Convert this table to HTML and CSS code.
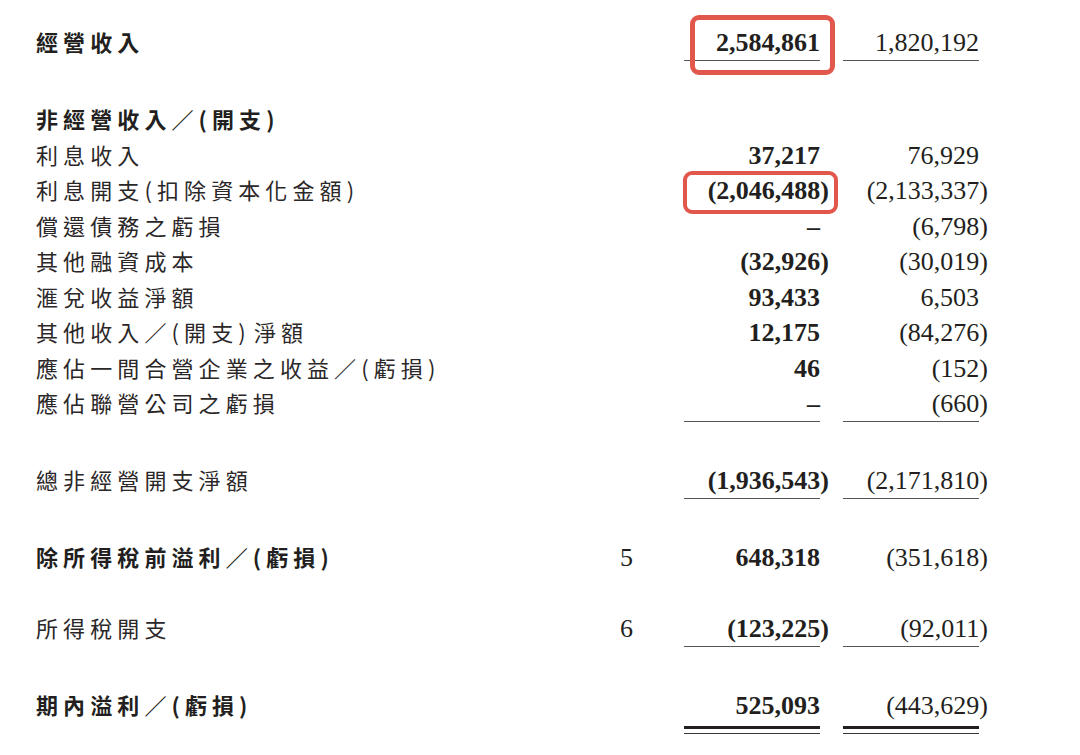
FILE: index.html
```html
<!DOCTYPE html>
<html lang="zh-Hant">
<head>
<meta charset="utf-8">
<link rel="stylesheet" href="styles.css">
</head>
<body>
<div class="stmt">
  <div class="row bold">
    <div class="label">經營收入</div><div class="note"></div>
    <div class="num c1 ul"><span class="mark mark-a"></span>2,584,861</div>
    <div class="num c2 ul">1,820,192</div>
  </div>

  <div class="row bold sp">
    <div class="label">非經營收入／(開支)</div><div class="note"></div>
    <div class="num c1"></div><div class="num c2"></div>
  </div>
  <div class="row">
    <div class="label">利息收入</div><div class="note"></div>
    <div class="num c1">37,217</div><div class="num c2">76,929</div>
  </div>
  <div class="row">
    <div class="label">利息開支(扣除資本化金額)</div><div class="note"></div>
    <div class="num c1"><span class="mark mark-b"></span>(2,046,488<span class="rp">)</span></div>
    <div class="num c2">(2,133,337<span class="rp">)</span></div>
  </div>
  <div class="row">
    <div class="label">償還債務之虧損</div><div class="note"></div>
    <div class="num c1">–</div><div class="num c2">(6,798<span class="rp">)</span></div>
  </div>
  <div class="row">
    <div class="label">其他融資成本</div><div class="note"></div>
    <div class="num c1">(32,926<span class="rp">)</span></div><div class="num c2">(30,019<span class="rp">)</span></div>
  </div>
  <div class="row">
    <div class="label">滙兌收益淨額</div><div class="note"></div>
    <div class="num c1">93,433</div><div class="num c2">6,503</div>
  </div>
  <div class="row">
    <div class="label">其他收入／(開支)<span class="thin"> </span>淨額</div><div class="note"></div>
    <div class="num c1">12,175</div><div class="num c2">(84,276<span class="rp">)</span></div>
  </div>
  <div class="row">
    <div class="label">應佔一間合營企業之收益／(虧損)</div><div class="note"></div>
    <div class="num c1">46</div><div class="num c2">(152<span class="rp">)</span></div>
  </div>
  <div class="row">
    <div class="label">應佔聯營公司之虧損</div><div class="note"></div>
    <div class="num c1 ul">–</div><div class="num c2 ul">(660<span class="rp">)</span></div>
  </div>

  <div class="row sp">
    <div class="label">總非經營開支淨額</div><div class="note"></div>
    <div class="num c1 ul">(1,936,543<span class="rp">)</span></div><div class="num c2 ul">(2,171,810<span class="rp">)</span></div>
  </div>

  <div class="row bold sp">
    <div class="label">除所得稅前溢利／(虧損)</div><div class="note">5</div>
    <div class="num c1">648,318</div><div class="num c2">(351,618<span class="rp">)</span></div>
  </div>

  <div class="row sp-sm">
    <div class="label">所得稅開支</div><div class="note">6</div>
    <div class="num c1 ul">(123,225<span class="rp">)</span></div><div class="num c2 ul">(92,011<span class="rp">)</span></div>
  </div>

  <div class="row bold sp last">
    <div class="label">期內溢利／(虧損)</div><div class="note"></div>
    <div class="num c1 dbl">525,093</div><div class="num c2 dbl">(443,629<span class="rp">)</span></div>
  </div>
</div>
</body>
</html>
```

FILE: styles.css
```css
html, body {
  margin: 0;
  padding: 0;
  background: #ffffff;
}

body {
  color: #231f20;
}

.stmt {
  padding: 25px 0 0 36px;
  width: 1044px;
}

.row {
  display: flex;
  align-items: flex-start;
  height: 35.5px;
}

.row.last {
  height: 46px;
}

.row.sp { margin-top: 41.5px; }
.row.sp-sm { margin-top: 35.5px; }

.label {
  flex: 0 0 557px;
  height: 35.5px;
  font-family: "Noto Sans CJK TC", "Noto Sans CJK SC", sans-serif;
  font-size: 22px;
  font-weight: 400;
  letter-spacing: 5.1px;
  line-height: 32px;
  white-space: nowrap;
  color: #2b2728;
}

.thin {
  letter-spacing: 0;
  font-size: 14px;
}

.row.bold .label {
  font-weight: 700;
  color: #231f20;
}

.note {
  flex: 0 0 40px;
  text-align: right;
  font-family: "Liberation Serif", "Times New Roman", serif;
  font-size: 26px;
  line-height: 35.5px;
}

.num {
  position: relative;
  flex: 0 0 136px;
  box-sizing: border-box;
  height: 35.5px;
  text-align: right;
  font-family: "Liberation Serif", "Times New Roman", serif;
  font-size: 26px;
  line-height: 35.5px;
  white-space: nowrap;
}

.c1 {
  margin-left: 51px;
  font-weight: 700;
}

.c2 {
  margin-left: 23px;
  font-weight: 400;
}

.rp {
  margin-right: -9px;
}

.ul {
  border-bottom: 1px solid #555;
}

.num.dbl {
  height: 46px;
  padding-bottom: 10.5px;
  background-image:
    linear-gradient(#231f20, #231f20),
    linear-gradient(#3a3637, #3a3637);
  background-repeat: no-repeat;
  background-size: 100% 3px, 100% 1.5px;
  background-position: left 0 bottom 5.5px, left 0 bottom 0;
}

.mark {
  position: absolute;
  border: 5px solid #e2574c;
  border-radius: 9px;
  pointer-events: none;
}

.mark-a {
  left: 6px;
  right: -15px;
  top: -10px;
  bottom: -15px;
}

.mark-b {
  left: -1px;
  right: -18px;
  top: -2px;
  bottom: -5px;
  border-width: 4.5px;
}
```
